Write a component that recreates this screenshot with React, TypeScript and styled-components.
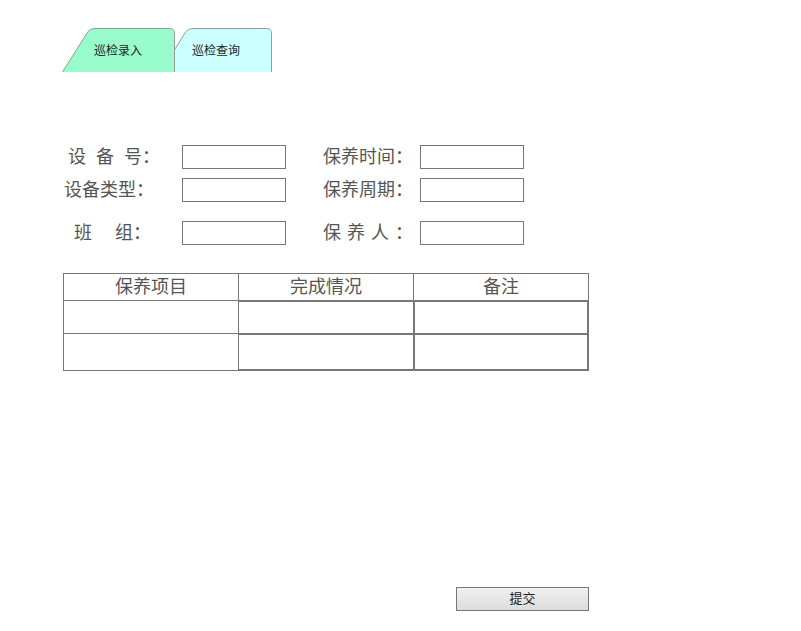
import React from "react";
import styled, { createGlobalStyle } from "styled-components";

const GlobalStyle = createGlobalStyle`
  html, body {
    margin: 0;
    padding: 0;
    background: #fff;
  }
  body {
    font-family: "Noto Sans CJK SC", "Noto Sans", sans-serif;
    color: #333;
  }
`;

type TabData = { title: string; fill: string; width: number };

const tabs: TabData[] = [
  { title: "巡检录入", fill: "#99fccb", width: 113 },
  { title: "巡检查询", fill: "#ccffff", width: 112 },
];

function TabShape({ fill, width }: { fill: string; width: number }) {
  const w = width - 0.5;
  return (
    <TabSvg width={width} height={44} viewBox={`0 0 ${width} 44`}>
      <path
        d={`M0.5 44 L26 3.5 Q28.5 0.5 33 0.5 L${w - 5} 0.5 Q${w} 0.5 ${w} 5.5 L${w} 44`}
        fill={fill}
        stroke="#999"
        strokeWidth={1}
      />
    </TabSvg>
  );
}

// spaced characters; unless spaceColon, the last one sits right against the colon
function FieldLabel({
  text,
  indent,
  spacing,
  spaceColon,
}: {
  text: string;
  indent?: number;
  spacing?: number;
  spaceColon?: boolean;
}) {
  if (spaceColon) {
    return (
      <Label indent={indent}>
        <Spaced spacing={spacing ?? 0}>{text}</Spaced>：
      </Label>
    );
  }
  return (
    <Label indent={indent}>
      <Spaced spacing={spacing ?? 0}>{text.slice(0, -1)}</Spaced>
      {text.slice(-1)}：
    </Label>
  );
}

export default function App() {
  return (
    <>
      <GlobalStyle />
      <Page>
        <TabBar>
          {tabs.map((t, i) => (
            <Tab key={t.title} width={t.width} front={i === 0}>
              <TabShape fill={t.fill} width={t.width} />
              <TabLabel>{t.title}</TabLabel>
            </Tab>
          ))}
        </TabBar>

        <Form>
          <FieldLabel text="设备号" indent={4} spacing={10} />
          <Field />
          <FieldLabel text="保养时间" indent={37} />
          <Field />

          <FieldLabel text="设备类型" />
          <Field />
          <FieldLabel text="保养周期" indent={37} />
          <Field />

          <FieldLabel text="班组" indent={10} spacing={23} />
          <Field />
          <FieldLabel text="保养人" indent={37} spacing={6} spaceColon />
          <Field />
        </Form>

        <Table>
          <HeadCell>保养项目</HeadCell>
          <HeadCell>完成情况</HeadCell>
          <HeadCell last>备注</HeadCell>

          <ItemCell h={33} />
          <CellInput h={33} w={176} first />
          <CellInput h={33} w={174} />

          <ItemCell h={36} last />
          <CellInput h={36} w={176} first />
          <CellInput h={36} w={174} />
        </Table>

        <Footer>
          <SubmitButton type="button">提交</SubmitButton>
        </Footer>
      </Page>
    </>
  );
}

const Page = styled.div`
  padding: 28px 0 0 62px;
  width: 801px;
  height: 631px;
  box-sizing: border-box;
  overflow: hidden;
`;

const TabBar = styled.div`
  display: flex;
  height: 44px;
`;

const Tab = styled.div<{ width: number; front: boolean }>`
  position: relative;
  width: ${(p) => p.width}px;
  height: 44px;
  margin-left: ${(p) => (p.front ? 0 : -15)}px;
  z-index: ${(p) => (p.front ? 2 : 1)};
`;

const TabSvg = styled.svg`
  position: absolute;
  left: 0;
  top: 0;
`;

const TabLabel = styled.span`
  position: relative;
  display: block;
  padding: 14px 0 0 32px;
  font-size: 12px;
  line-height: 16px;
  color: #222;
`;

const Form = styled.div`
  display: grid;
  grid-template-columns: 118px 104px 134px 104px;
  grid-template-rows: 33px 43px 24px;
  align-items: start;
  margin: 73px 0 0 2px;
`;

const Label = styled.div<{ indent?: number }>`
  height: 24px;
  line-height: 20px;
  padding-left: ${(p) => p.indent ?? 0}px;
  font-size: 18px;
  color: #555;
  white-space: nowrap;
`;

const Spaced = styled.span<{ spacing: number }>`
  letter-spacing: ${(p) => p.spacing}px;
`;

const Field = styled.input`
  width: 104px;
  height: 24px;
  box-sizing: border-box;
  border: 1px solid #777;
  padding: 0 3px;
  margin: 0;
  font-size: 14px;
`;

const Table = styled.div`
  display: grid;
  grid-template-columns: 175px 175px 174px;
  width: 524px;
  margin: 28px 0 0 1px;
  border: 1px solid #777;
`;

const HeadCell = styled.div<{ last?: boolean }>`
  height: 26px;
  line-height: 22px;
  text-align: center;
  font-size: 18px;
  color: #555;
  border-bottom: 1px solid #777;
  border-right: ${(p) => (p.last ? "none" : "1px solid #777")};
`;

const ItemCell = styled.div<{ h: number; last?: boolean }>`
  height: ${(p) => p.h}px;
  box-sizing: border-box;
  border-right: 1px solid #777;
  border-bottom: ${(p) => (p.last ? "none" : "1px solid #777")};
`;

const CellInput = styled.input<{ h: number; w: number; first?: boolean }>`
  display: block;
  width: ${(p) => p.w}px;
  height: ${(p) => p.h}px;
  box-sizing: border-box;
  margin: 0 0 0 ${(p) => (p.first ? -1 : 0)}px;
  padding: 0 3px;
  border: 1px solid #777;
  font-size: 14px;
`;

const Footer = styled.div`
  display: flex;
  justify-content: flex-end;
  width: 527px;
  margin-top: 216px;
`;

const SubmitButton = styled.button`
  width: 133px;
  height: 24px;
  padding: 0 0 3px;
  border: 1px solid #777;
  background: linear-gradient(#f0f0f0, #dcdcdc);
  font-family: "Noto Sans CJK SC", sans-serif;
  font-size: 13px;
  color: #222;
  cursor: pointer;
`;
